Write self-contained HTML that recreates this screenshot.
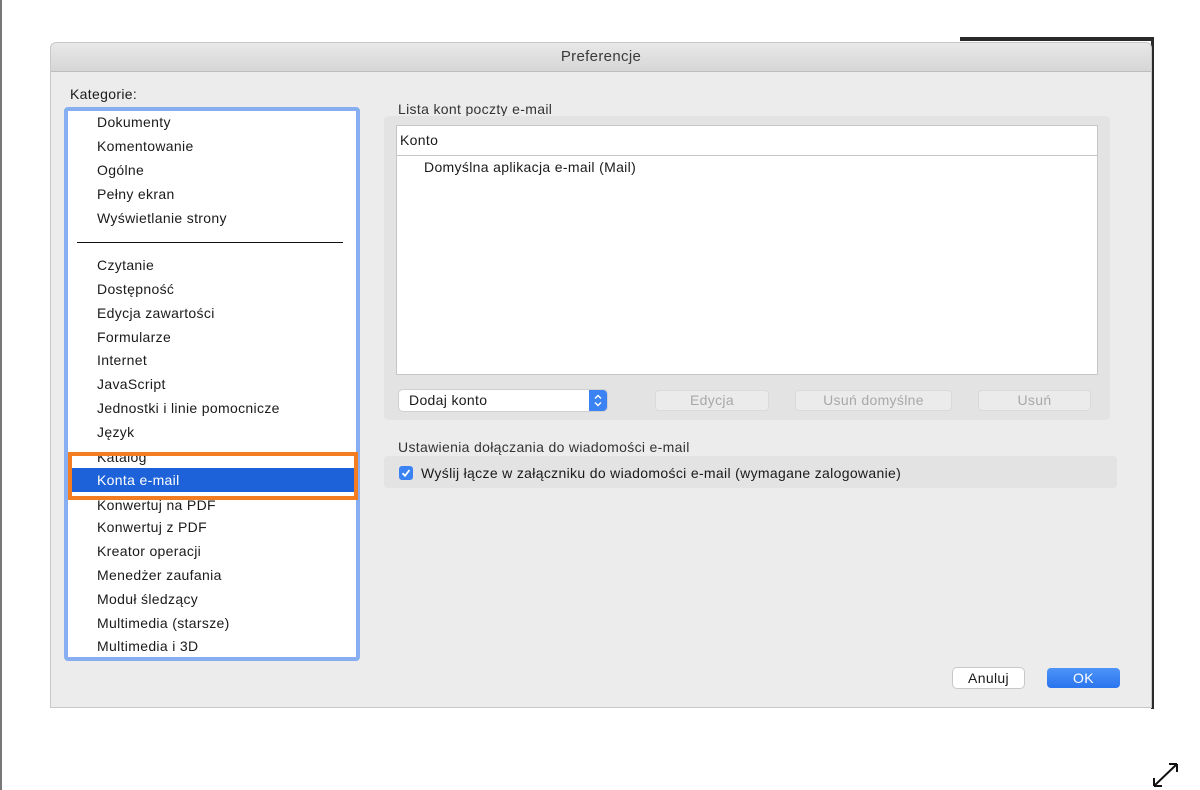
<!DOCTYPE html>
<html><head><meta charset="utf-8"><style>
*{margin:0;padding:0;box-sizing:border-box}
body{width:1200px;height:790px;background:#fff;position:relative;overflow:hidden;font-family:"Liberation Sans",sans-serif;font-size:14px;color:#1a1a1a;letter-spacing:0.33px}
.a{position:absolute}
.it{position:absolute;left:97px;line-height:18px;white-space:nowrap}
.btn{position:absolute;height:21px;border-radius:4px;background:#ebebeb;border:1px solid #dadada;color:#a8a8a8;text-align:center;line-height:19px;font-size:14px}
</style></head><body>
<div class="a" style="left:0;top:0;width:2px;height:790px;background:#777"></div>
<div class="a" style="left:960px;top:37px;width:194px;height:4px;background:#2a2a2a"></div>
<div class="a" style="left:1151px;top:37px;width:3px;height:672px;background:#2a2a2a"></div>
<div class="a" style="left:50px;top:42px;width:1102px;height:666px;background:#ececec;border-radius:6px 6px 0 0;border:1px solid #c8c8c8"></div>
<div class="a" style="left:51px;top:43px;width:1100px;height:29px;background:linear-gradient(#e8e8e8,#d6d6d6);border-bottom:1px solid #bdbdbd;border-radius:6px 6px 0 0;text-align:center;line-height:28px;font-size:15px;color:#3a3a3a">Preferencje</div>
<div class="a" style="left:70px;top:85px;line-height:18px">Kategorie:</div>
<div class="a" style="left:64px;top:107px;width:296px;height:554px;border:4px solid #86aef0;border-radius:4px;background:#fff"></div>
<div class="it" style="top:113px">Dokumenty</div>
<div class="it" style="top:137px">Komentowanie</div>
<div class="it" style="top:161px">Ogólne</div>
<div class="it" style="top:185px">Pełny ekran</div>
<div class="it" style="top:209px">Wyświetlanie strony</div>
<div class="a" style="left:77px;top:242px;width:266px;height:1px;background:#111"></div>
<div class="it" style="top:256px">Czytanie</div>
<div class="it" style="top:280px">Dostępność</div>
<div class="it" style="top:304px">Edycja zawartości</div>
<div class="it" style="top:328px">Formularze</div>
<div class="it" style="top:351px">Internet</div>
<div class="it" style="top:375px">JavaScript</div>
<div class="it" style="top:399px">Jednostki i linie pomocnicze</div>
<div class="it" style="top:423px">Język</div>
<div class="it" style="top:448px">Katalog</div>
<div class="a" style="left:72px;top:468px;width:282px;height:24px;background:#1d62d9"></div>
<div class="it" style="top:471px;color:#fff">Konta e-mail</div>
<div class="it" style="top:496px">Konwertuj na PDF</div>
<div class="it" style="top:518px">Konwertuj z PDF</div>
<div class="it" style="top:542px">Kreator operacji</div>
<div class="it" style="top:566px">Menedżer zaufania</div>
<div class="it" style="top:590px">Moduł śledzący</div>
<div class="it" style="top:614px">Multimedia (starsze)</div>
<div class="it" style="top:637px">Multimedia i 3D</div>
<div class="a" style="left:68px;top:452px;width:290px;height:48px;border:4px solid #f47d22"></div>
<div class="a" style="left:398px;top:100px;line-height:18px;color:#333">Lista kont poczty e-mail</div>
<div class="a" style="left:384px;top:116px;width:726px;height:304px;background:#e3e3e3;border-radius:4px"></div>
<div class="a" style="left:396px;top:125px;width:702px;height:250px;background:#fff;border:1px solid #c6c6c6"></div>
<div class="a" style="left:397px;top:155px;width:700px;height:1px;background:#c6c6c6"></div>
<div class="a" style="left:400px;top:131px;line-height:18px">Konto</div>
<div class="a" style="left:424px;top:158px;line-height:18px">Domyślna aplikacja e-mail (Mail)</div>
<div class="a" style="left:399px;top:390px;width:208px;height:21px;background:#fff;border-radius:4px;box-shadow:0 0 0 1px #cfcfcf;line-height:21px;padding-left:10px">Dodaj konto</div>
<div class="a" style="left:589px;top:390px;width:18px;height:21px;background:#3b82f2;border-radius:0 4px 4px 0"><svg width="18" height="21"><path d="M6 8.5 9 5.5 12 8.5 M6 12.5 9 15.5 12 12.5" stroke="#fff" stroke-width="1.4" fill="none"/></svg></div>
<div class="btn" style="left:655px;top:390px;width:114px">Edycja</div>
<div class="btn" style="left:795px;top:390px;width:157px">Usuń domyślne</div>
<div class="btn" style="left:978px;top:390px;width:113px">Usuń</div>
<div class="a" style="left:398px;top:438px;line-height:18px;color:#333">Ustawienia dołączania do wiadomości e-mail</div>
<div class="a" style="left:384px;top:456px;width:733px;height:32px;background:#e3e3e3;border-radius:4px"></div>
<div class="a" style="left:399px;top:466px;width:14px;height:14px;background:#3b82f2;border-radius:3px"><svg width="14" height="14"><path d="M3.5 7.2 6 9.8 10.5 4" stroke="#fff" stroke-width="1.8" fill="none"/></svg></div>
<div class="a" style="left:421px;top:464px;line-height:18px">Wyślij łącze w załączniku do wiadomości e-mail (wymagane zalogowanie)</div>
<div class="a" style="left:953px;top:668px;width:71px;height:20px;background:#fff;border-radius:4px;box-shadow:0 0 0 1px #c8c8c8;text-align:center;line-height:20px">Anuluj</div>
<div class="a" style="left:1047px;top:668px;width:73px;height:20px;background:linear-gradient(#4d94f8,#2a74ee);border-radius:4px;color:#fff;text-align:center;line-height:20px">OK</div>
<svg class="a" style="left:1150px;top:760px" width="32" height="30"><path d="M4 26 L27 4 M4 26 L4 18 M4 26 L12 26 M27 4 L19 4 M27 4 L27 12" stroke="#111" stroke-width="2" fill="none"/></svg>
</body></html>
